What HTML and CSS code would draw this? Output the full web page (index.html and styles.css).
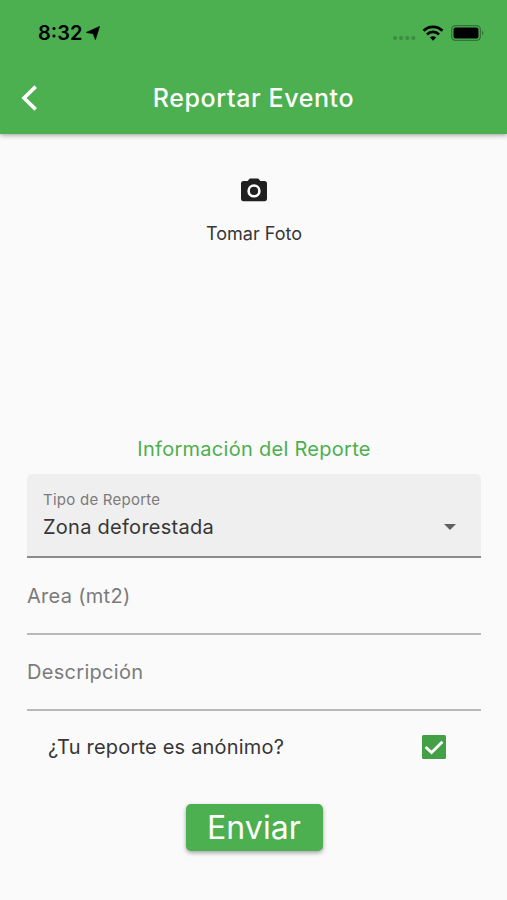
FILE: index.html
```html
<!DOCTYPE html>
<html lang="es">
<head>
    <meta charset="UTF-8">
    <meta name="viewport" content="width=device-width, initial-scale=1.0">
    <title>Reportar Evento</title>
    <link rel="stylesheet" href="styles.css">
</head>
<body>
    <header class="app-bar">
        <div class="status-bar">
            <span class="time">8:32</span>
            <svg class="location" width="14" height="14" viewBox="0 0 14 14"><path d="M13.6 0.4 L9.4 13.8 L7.2 7.8 L0.2 6.4 Z" stroke="#000" stroke-width="0.6" stroke-linejoin="round"/></svg>
            <div class="status-icons">
                <svg width="24" height="6" viewBox="0 0 24 6" class="signal">
                    <circle cx="3" cy="3" r="2"/><circle cx="9" cy="3" r="2"/><circle cx="15.2" cy="3" r="2"/><circle cx="21.3" cy="3" r="2"/>
                </svg>
                <svg width="22" height="16" viewBox="0 0 22 16" class="wifi">
                    <path d="M1.6 5.7 A13.4 13.4 0 0 1 20.4 5.7"/>
                    <path d="M5 9.4 A8.6 8.6 0 0 1 17 9.4"/>
                    <path class="dot" d="M7.9 12.6 A4.5 4.5 0 0 1 14.1 12.6 L11 15.7 Z"/>
                </svg>
                <svg width="33" height="16" viewBox="0 0 33 16" class="battery">
                    <rect class="outline" x="0.6" y="0.6" width="28.8" height="14.8" rx="4"/>
                    <rect x="2.5" y="2.6" width="25" height="10.8" rx="2"/>
                    <path class="cap" d="M31 5.5 Q34 8 31 10.5 Z"/>
                </svg>
            </div>
        </div>
        <nav class="toolbar">
            <svg class="back" width="18" height="26" viewBox="0 0 18 26"><path d="M15.7 1.6 L4 13 L15.7 24.4"/></svg>
            <h1>Reportar Evento</h1>
        </nav>
    </header>

    <main>
        <div class="photo">
            <svg width="26" height="24" viewBox="0 0 26 24">
                <path d="M8.8 0.4 H17.2 L19.4 3 H23.4 A2.6 2.6 0 0 1 26 5.6 V20.6 A2.6 2.6 0 0 1 23.4 23.2 H2.6 A2.6 2.6 0 0 1 0 20.6 V5.6 A2.6 2.6 0 0 1 2.6 3 H6.6 Z"/>
                <circle cx="13" cy="12.9" r="5.4"/>
            </svg>
            <span>Tomar Foto</span>
        </div>

        <form class="report">
            <h2>Información del Reporte</h2>

            <div class="select-field">
                <div>
                    <div class="label">Tipo de Reporte</div>
                    <div class="value">Zona deforestada</div>
                </div>
                <svg width="12" height="6" viewBox="0 0 12 6"><path d="M0 0 H12 L6 6 Z"/></svg>
            </div>

            <div class="text-field area">Area (mt2)</div>
            <div class="text-field description">Descripción</div>

            <div class="check-row">
                <span>¿Tu reporte es anónimo?</span>
                <svg width="24" height="24" viewBox="0 0 24 24">
                    <rect width="24" height="24" rx="1.5"/>
                    <path d="M3.6 12 L9.6 17.6 L20.4 6.8"/>
                </svg>
            </div>

            <button type="button">Enviar</button>
        </form>
    </main>
</body>
</html>
```
FILE: styles.css
```css
* {
    box-sizing: border-box;
}

body {
    margin: 0;
    height: 900px;
    overflow: hidden;
    background-color: #fafafa;
    color: #363636;
    font-family: Inter, sans-serif;
}

h1, h2 {
    margin: 0;
}

svg {
    display: block;
    flex: none;
}

.app-bar {
    height: 134px;
    background-color: #4caf50;
    box-shadow: 0 1px 5px rgba(0, 0, 0, 0.4);
}

.status-bar {
    display: flex;
    align-items: center;
    height: 66px;
    padding: 0 23px 0 38px;
    color: #000;
}

.time {
    width: 48px;
    font-size: 20px;
    font-weight: 600;
    white-space: nowrap;
}

.status-icons {
    display: flex;
    align-items: center;
    margin-left: auto;
}

.signal {
    margin: 10px 6px 0 0;
    fill: #3c8b40;
}

.wifi {
    margin-right: 7px;
    fill: none;
    stroke: #000;
    stroke-width: 2.8;
}

.wifi .dot {
    fill: #000;
    stroke: none;
}

.battery .outline {
    fill: none;
    stroke: #327435;
    stroke-width: 1.2;
}

.battery .cap {
    fill: #327435;
}

.toolbar {
    display: grid;
    grid-template-columns: 40px 1fr 40px;
    align-items: center;
    height: 64px;
    padding: 0 20px;
}

.back {
    fill: none;
    stroke: #fff;
    stroke-width: 3.6;
}

h1 {
    color: #fff;
    font-size: 25px;
    font-weight: 500;
    letter-spacing: 0.6px;
    text-align: center;
    white-space: nowrap;
}

main {
    padding: 45px 26px 0 27px;
}

.photo {
    display: flex;
    flex-direction: column;
    align-items: center;
    gap: 19px;
    height: 256px;
    font-size: 18px;
}

.photo svg {
    margin-top: -1px;
    fill: #1f1f1f;
}

.photo circle {
    fill: none;
    stroke: #fafafa;
    stroke-width: 2.6;
}

.photo span {
    line-height: 26px;
}

h2 {
    height: 39px;
    color: #4caf50;
    font-size: 20px;
    font-weight: 400;
    letter-spacing: 0.28px;
    line-height: 28px;
    text-align: center;
}

.select-field {
    display: flex;
    justify-content: space-between;
    height: 84px;
    padding: 15px 25px 0 16px;
    background-color: #efefef;
    border-bottom: 2px solid #8b8b8b;
    border-radius: 5px 5px 0 0;
}

.select-field svg {
    margin-top: 35px;
    fill: #616161;
}

.label {
    color: #7b7b7b;
    font-size: 15px;
    letter-spacing: 0.25px;
    line-height: 22px;
}

.value {
    font-size: 20px;
    letter-spacing: 0.27px;
    line-height: 32px;
}

.text-field {
    height: 77px;
    padding-top: 24px;
    border-bottom: 2px solid #b9b9b9;
    color: #7b7b7b;
    font-size: 20px;
    letter-spacing: 0.3px;
    line-height: 28px;
}

.description {
    height: 76px;
    padding-top: 23px;
}

.check-row {
    display: flex;
    align-items: center;
    justify-content: space-between;
    height: 71px;
    padding: 0 35px 0 21px;
    font-size: 20px;
    letter-spacing: 0.2px;
}

.check-row rect {
    fill: #43a047;
}

.check-row path {
    fill: none;
    stroke: #fff;
    stroke-width: 2.8;
}

button {
    display: block;
    width: 137px;
    height: 47px;
    margin: 22px auto 0;
    padding: 0;
    border: none;
    border-radius: 5px;
    background-color: #4caf50;
    box-shadow: 0 2px 4px rgba(0, 0, 0, 0.35);
    color: #fff;
    font-family: inherit;
    font-size: 32px;
    letter-spacing: 0.1px;
    line-height: 47px;
}
```
